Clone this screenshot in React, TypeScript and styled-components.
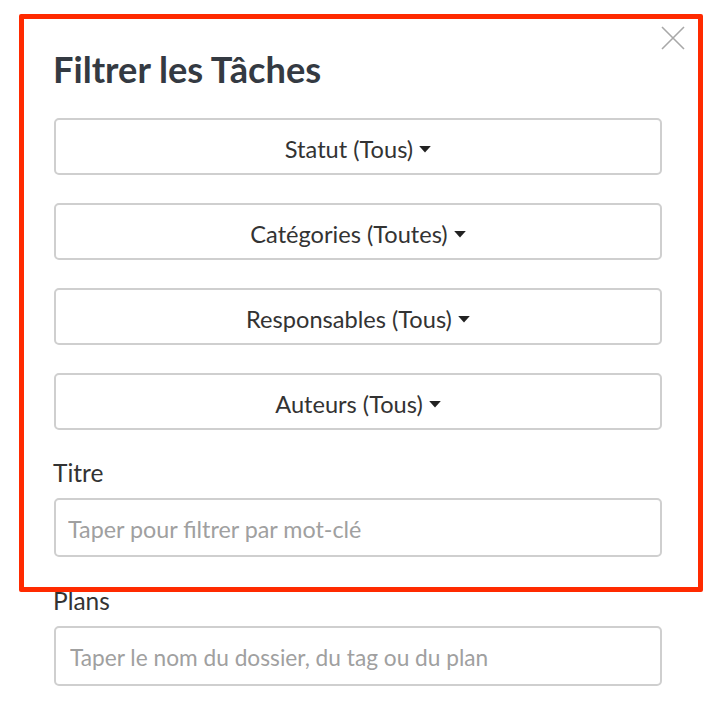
import React from "react";
import styled, { createGlobalStyle } from "styled-components";

const GlobalStyle = createGlobalStyle`
  html, body {
    margin: 0;
    padding: 0;
    background: #fff;
  }
  body {
    font-family: Lato, "Open Sans", sans-serif;
    color: #333;
  }
`;

const filters = [
  "Statut (Tous)",
  "Catégories (Toutes)",
  "Responsables (Tous)",
  "Auteurs (Tous)",
];

const Caret = () => (
  <CaretIcon viewBox="0 0 10 6" aria-hidden>
    <path d="M0 0 H10 L5 5.5 Z" fill="currentColor" />
  </CaretIcon>
);

const App = () => {
  return (
    <>
      <GlobalStyle />
      <Page>
        <Modal>
          <CloseButton aria-label="Fermer">
            <svg viewBox="0 0 24 24" width="24" height="24">
              <path
                d="M1 1 L23 23 M23 1 L1 23"
                stroke="#a8a8a8"
                strokeWidth="1.6"
                fill="none"
              />
            </svg>
          </CloseButton>
          <Title>Filtrer les Tâches</Title>
          <FilterList>
            {filters.map((f) => (
              <FilterButton key={f}>
                {f}
                <Caret />
              </FilterButton>
            ))}
          </FilterList>
          <Field>
            <Label>Titre</Label>
            <TextInput placeholder="Taper pour filtrer par mot-clé" />
          </Field>
          <Field $gap={31}>
            <Label>Plans</Label>
            <TextInput $tags placeholder="Taper le nom du dossier, du tag ou du plan" />
          </Field>
        </Modal>
        <Highlight />
      </Page>
    </>
  );
};

export default App;

const Page = styled.div`
  position: relative;
  width: 714px;
  height: 704px;
  overflow: hidden;
`;

const Modal = styled.div`
  position: relative;
  box-sizing: border-box;
  width: 714px;
  padding: 45px 52px 0 54px;
`;

const Highlight = styled.div`
  position: absolute;
  left: 19px;
  top: 14px;
  width: 684px;
  height: 578px;
  box-sizing: border-box;
  border: 5px solid #ff2a00;
  border-radius: 2px;
  pointer-events: none;
`;

const CloseButton = styled.button`
  position: absolute;
  top: 26px;
  right: 29px;
  padding: 0;
  border: none;
  background: none;
  line-height: 0;
  cursor: pointer;
`;

const Title = styled.h1`
  margin: 0 0 0 -1px;
  font-size: 36.2px;
  line-height: 48px;
  font-weight: 700;
  color: #343a42;
`;

const FilterList = styled.div`
  display: flex;
  flex-direction: column;
  gap: 28px;
  margin-top: 25px;
`;

const FilterButton = styled.button`
  display: flex;
  align-items: center;
  justify-content: center;
  gap: 6px;
  box-sizing: border-box;
  width: 100%;
  height: 57px;
  border: 2px solid #cfcfcf;
  border-radius: 5px;
  background: #fff;
  font-family: Lato, "Open Sans", sans-serif;
  font-size: 23.6px;
  color: #333;
  padding: 4px 0 0;
  cursor: pointer;
`;

const CaretIcon = styled.svg`
  width: 12px;
  height: 7px;
  color: #222;
  margin-top: 1px;
`;

const Field = styled.div<{ $gap?: number }>`
  display: flex;
  flex-direction: column;
  margin-top: ${(p) => p.$gap ?? 30}px;
`;

const Label = styled.label`
  font-size: 24.5px;
  line-height: 26px;
  color: #333;
  margin: 0 0 12px -1px;
`;

const TextInput = styled.input<{ $tags?: boolean }>`
  box-sizing: border-box;
  width: 100%;
  height: ${(p) => (p.$tags ? 60 : 59)}px;
  padding: 2px ${(p) => (p.$tags ? 14 : 12)}px 0;
  border: 2px solid #cfcfcf;
  border-radius: 5px;
  font-family: Lato, "Open Sans", sans-serif;
  font-size: ${(p) => (p.$tags ? 22.7 : 23.3)}px;
  color: #333;
  outline: none;
  &::placeholder {
    color: #a0a0a0;
  }
`;
